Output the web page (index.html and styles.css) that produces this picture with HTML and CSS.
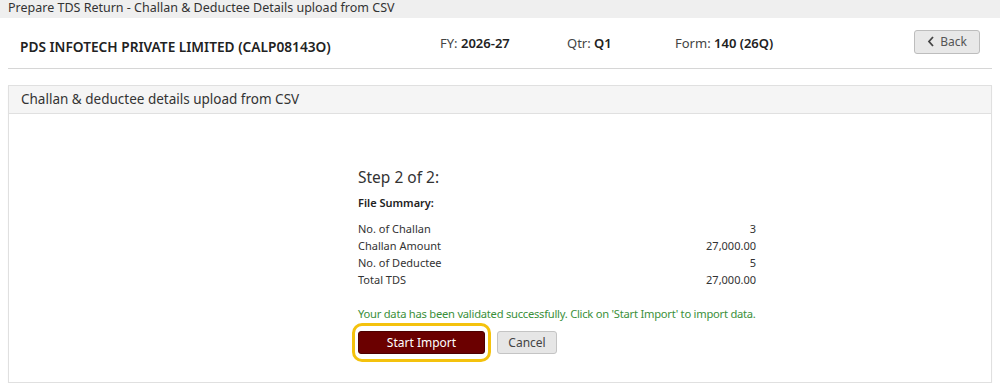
FILE: index.html
```html
<!DOCTYPE html>
<html lang="en">
<head>
    <meta charset="UTF-8">
    <title>Prepare TDS Return - Challan &amp; Deductee Details upload from CSV</title>
    <link rel="stylesheet" href="styles.css">
</head>
<body>
    <div class="titlebar">Prepare TDS Return - Challan &amp; Deductee Details upload from CSV</div>

    <div class="header">
        <div class="company">PDS INFOTECH PRIVATE LIMITED (CALP08143O)</div>
        <div class="meta meta-fy">FY: <b>2026-27</b></div>
        <div class="meta meta-qtr">Qtr: <b>Q1</b></div>
        <div class="meta meta-form">Form: <b>140 (26Q)</b></div>
        <button class="btn-back">
            <svg class="chev" width="8" height="11" viewBox="0 0 8 11"><path d="M6 1 L2 5.5 L6 10" fill="none" stroke="#444" stroke-width="1.8"/></svg>
            Back
        </button>
    </div>

    <div class="panel">
        <div class="panel-heading">Challan &amp; deductee details upload from CSV</div>
        <div class="panel-body">
            <div class="step">
                <div class="step-title">Step 2 of 2:</div>
                <div class="summary-title">File Summary:</div>
                <table class="summary">
                    <tr><td>No. of Challan</td><td class="num">3</td></tr>
                    <tr><td>Challan Amount</td><td class="num">27,000.00</td></tr>
                    <tr><td>No. of Deductee</td><td class="num">5</td></tr>
                    <tr><td>Total TDS</td><td class="num">27,000.00</td></tr>
                </table>
                <div class="success">Your data has been validated successfully. Click on 'Start Import' to import data.</div>
                <div class="actions">
                    <span class="highlight"><button class="btn-import">Start Import</button></span>
                    <button class="btn-cancel">Cancel</button>
                </div>
            </div>
        </div>
    </div>
</body>
</html>
```

FILE: styles.css
```css
body {
    margin: 0;
    padding: 0;
    font-family: "Noto Sans", "Open Sans", sans-serif;
    background-color: #fff;
    color: #333;
}

.titlebar {
    background-color: #efefef;
    height: 18px;
    line-height: 16px;
    padding-left: 8px;
    font-size: 12.5px;
    color: #333;
}

.header {
    display: flex;
    align-items: center;
    height: 50px;
    margin: 0 8px;
    padding-left: 12px;
    border-bottom: 1px solid #d6d6d6;
    font-size: 13px;
}

.company {
    width: 420px;
    font-size: 13.7px;
    font-weight: 600;
    color: #222;
    padding-top: 7px;
}

.meta {
    color: #444;
}

.meta b {
    font-weight: 600;
    color: #222;
}

.meta-fy {
    width: 127px;
}

.meta-qtr {
    width: 108px;
}

.meta-form {
    flex: 1;
}

.btn-back {
    display: flex;
    align-items: center;
    justify-content: center;
    gap: 5px;
    width: 66px;
    height: 24px;
    margin-right: 12px;
    margin-top: -3px;
    background-color: #e8e8e8;
    border: 1px solid #bdbdbd;
    border-radius: 3px;
    font-family: inherit;
    font-size: 12px;
    color: #555;
    padding: 0 0 1px;
}

.panel {
    margin: 16px 8px 0;
    border: 1px solid #e0e0e0;
    height: 296px;
    box-shadow: 0 1px 1px rgba(0, 0, 0, 0.05);
}

.panel-heading {
    background-color: #f5f5f5;
    border-bottom: 1px solid #e0e0e0;
    height: 27px;
    line-height: 26px;
    padding-left: 12px;
    font-size: 13.5px;
    color: #333;
}

.panel-body {
    padding: 53px 0 0 349px;
}

.step {
    width: 398px;
    font-size: 11px;
    color: #333;
}

.step-title {
    font-size: 15.5px;
    color: #333;
    line-height: 20px;
}

.summary-title {
    font-weight: 600;
    margin-top: 8px;
    line-height: 16px;
    color: #222;
}

.summary {
    width: 100%;
    border-collapse: collapse;
    margin-top: 9px;
}

.summary td {
    padding: 0;
    height: 17px;
    line-height: 17px;
}

.summary .num {
    text-align: right;
}

.success {
    color: #3a8f3a;
    margin-top: 18px;
    line-height: 16px;
    font-size: 11.2px;
    letter-spacing: -0.25px;
    white-space: nowrap;
}

.actions {
    display: flex;
    align-items: center;
    margin-top: 1px;
    margin-left: -6px;
}

.highlight {
    display: inline-block;
    border: 3px solid #f4c20d;
    border-radius: 10px;
    padding: 5px 3px;
}

.btn-import {
    display: block;
    width: 127px;
    height: 23px;
    background-color: #6b0000;
    color: #fff;
    border: 1px solid #4d0000;
    border-radius: 3px;
    font-family: inherit;
    font-size: 12px;
    padding: 0;
}

.btn-cancel {
    width: 60px;
    height: 23px;
    margin-left: 6px;
    background-color: #e6e6e6;
    border: 1px solid #c4c4c4;
    border-radius: 3px;
    font-family: inherit;
    font-size: 12px;
    color: #444;
    padding: 0;
}
```
